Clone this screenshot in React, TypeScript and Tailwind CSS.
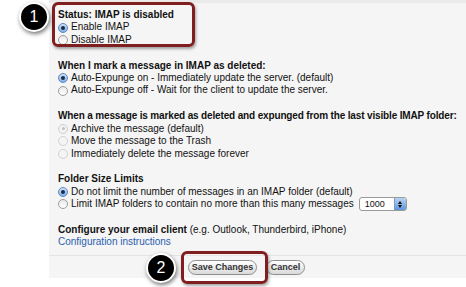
import type { ReactNode } from "react";

type RadioState = "on" | "off" | "disabledOn" | "disabledOff";

function Radio({ state }: { state: RadioState }) {
  if (state === "on") {
    return (
      <span className="mr-[3px] flex h-[10px] w-[10px] shrink-0 items-center justify-center rounded-full border border-[#5d86bf] bg-gradient-to-b from-[#cfe2f8] to-[#7fb0ea]">
        <span className="h-[4px] w-[4px] rounded-full bg-[#1d2a44]" />
      </span>
    );
  }
  if (state === "disabledOn") {
    return (
      <span className="mr-[3px] flex h-[10px] w-[10px] shrink-0 items-center justify-center rounded-full border border-[#cfcfcf] bg-[#f2f2f2]">
        <span className="h-[3px] w-[3px] rounded-full bg-[#bdbdbd]" />
      </span>
    );
  }
  if (state === "disabledOff") {
    return <span className="mr-[3px] h-[10px] w-[10px] shrink-0 rounded-full border border-[#d2d2d2] bg-[#f4f4f4]" />;
  }
  return (
    <span className="mr-[3px] h-[10px] w-[10px] shrink-0 rounded-full border border-[#9c9c9c] bg-gradient-to-b from-[#e9e9e9] to-white" />
  );
}

function Option({ state, children }: { state: RadioState; children: ReactNode }) {
  return (
    <div className="flex h-[12.4px] items-center whitespace-nowrap">
      <Radio state={state} />
      <span>{children}</span>
    </div>
  );
}

function Section({ title, children }: { title: ReactNode; children: ReactNode }) {
  return (
    <div className="mb-[13.5px]">
      <div className="h-[12.4px] whitespace-nowrap font-bold">{title}</div>
      {children}
    </div>
  );
}

function Callout({ n, className }: { n: number; className: string }) {
  return (
    <div
      className={`absolute flex h-[30px] w-[30px] items-center justify-center rounded-full border-2 border-white bg-black text-[16px] text-white shadow-[1px_2px_4px_rgba(0,0,0,0.55)] ${className}`}
    >
      {n}
    </div>
  );
}

export default function App() {
  return (
    <div className="relative h-[287px] w-[466px] overflow-hidden bg-white font-['Liberation_Sans',Arial,sans-serif] text-[10px] leading-[12.4px] text-[#111]">
      <div className="ml-[49px] flex h-[278px] flex-col border-t-[3px] border-[#ebebeb] bg-[#f5f5f5]">
        <div className="pl-[9px] pt-[6px]">
          <Section title="Status: IMAP is disabled">
            <Option state="on">Enable IMAP</Option>
            <Option state="off">Disable IMAP</Option>
          </Section>

          <Section title="When I mark a message in IMAP as deleted:">
            <Option state="on">Auto-Expunge on - Immediately update the server. (default)</Option>
            <Option state="off">Auto-Expunge off - Wait for the client to update the server.</Option>
          </Section>

          <Section
            title={
              <span className="tracking-[-0.15px]">
                When a message is marked as deleted and expunged from the last visible IMAP folder:
              </span>
            }
          >
            <Option state="disabledOn">Archive the message (default)</Option>
            <Option state="disabledOff">Move the message to the Trash</Option>
            <Option state="disabledOff">Immediately delete the message forever</Option>
          </Section>

          <Section title="Folder Size Limits">
            <Option state="on">Do not limit the number of messages in an IMAP folder (default)</Option>
            <div className="flex h-[12.4px] items-center whitespace-nowrap">
              <Radio state="off" />
              <span>Limit IMAP folders to contain no more than this many messages</span>
              <div className="ml-[5px] flex h-[14px] w-[48px] items-center overflow-hidden rounded-[3px] border border-[#9a9a9a] bg-white">
                <span className="flex-1 pl-[5px] text-[9px]">1000</span>
                <span className="flex h-full w-[12px] flex-col items-center justify-center gap-[1px] border-l border-[#7a9cc8] bg-gradient-to-b from-[#b9d4f3] to-[#5d95db]">
                  <span className="h-0 w-0 border-x-[2.5px] border-b-[3px] border-x-transparent border-b-[#111]" />
                  <span className="h-0 w-0 border-x-[2.5px] border-t-[3px] border-x-transparent border-t-[#111]" />
                </span>
              </div>
            </div>
          </Section>

          <div className="whitespace-nowrap">
            <div className="h-[12.4px]">
              <span className="font-bold">Configure your email client</span> (e.g. Outlook, Thunderbird, iPhone)
            </div>
            <div className="h-[12.4px] text-[#2a5db0]">Configuration instructions</div>
          </div>
        </div>

        <div className="mt-auto flex h-[23px] items-center gap-[9px] border-t border-[#e4e4e4] pl-[139px]">
          <button className="flex h-[15px] w-[69px] items-center justify-center rounded-full border border-[#8f8f8f] bg-gradient-to-b from-white to-[#d9d9d9] text-[9px] font-bold text-[#333]">
            Save Changes
          </button>
          <button className="flex h-[15px] w-[39px] items-center justify-center rounded-full border border-[#8f8f8f] bg-gradient-to-b from-white to-[#d9d9d9] text-[9px] font-bold text-[#333]">
            Cancel
          </button>
        </div>
      </div>

      <div className="absolute left-[52px] top-[2px] h-[45px] w-[143px] rounded-[6px] border-[3px] border-[#7f1f1f] shadow-[1px_2px_3px_rgba(0,0,0,0.35)]" />
      <div className="absolute left-[181px] top-[251px] h-[33px] w-[87px] rounded-[6px] border-[3px] border-[#7f1f1f] shadow-[1px_2px_3px_rgba(0,0,0,0.35)]" />

      <Callout n={1} className="left-[19px] top-[2px]" />
      <Callout n={2} className="left-[146px] top-[253px]" />
    </div>
  );
}
